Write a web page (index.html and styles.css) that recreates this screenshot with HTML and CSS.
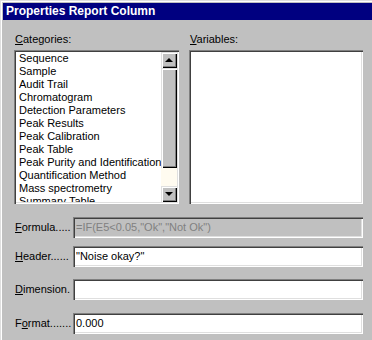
FILE: index.html
```html
<!DOCTYPE html>
<html lang="en">
<head>
    <meta charset="UTF-8">
    <title>Properties Report Column</title>
    <link rel="stylesheet" href="styles.css">
</head>
<body>
    <div class="window">
        <div class="titlebar">Properties Report Column</div>

        <div class="dialog">
            <div class="columns">
                <div class="col col-left">
                    <label class="caption"><u>C</u>ategories:</label>
                    <div class="listbox">
                        <ul class="items">
                            <li>Sequence</li>
                            <li>Sample</li>
                            <li>Audit Trail</li>
                            <li>Chromatogram</li>
                            <li>Detection Parameters</li>
                            <li>Peak Results</li>
                            <li>Peak Calibration</li>
                            <li>Peak Table</li>
                            <li>Peak Purity and Identification</li>
                            <li>Quantification Method</li>
                            <li>Mass spectrometry</li>
                            <li>Summary Table</li>
                        </ul>
                        <div class="scrollbar">
                            <div class="sb-btn"><span class="arrow up"></span></div>
                            <div class="sb-thumb"></div>
                            <div class="sb-track"></div>
                            <div class="sb-btn"><span class="arrow down"></span></div>
                        </div>
                    </div>
                </div>
                <div class="col col-right">
                    <label class="caption"><u>V</u>ariables:</label>
                    <div class="listbox"></div>
                </div>
            </div>

            <div class="field row-formula">
                <label><u>F</u>ormula.....</label>
                <div class="edit disabled">=IF(E5&lt;0.05,"Ok","Not Ok")</div>
            </div>
            <div class="field row-header">
                <label><u>H</u>eader......</label>
                <div class="edit">"Noise okay?"</div>
            </div>
            <div class="field row-dimension">
                <label><u>D</u>imension.</label>
                <div class="edit"></div>
            </div>
            <div class="field row-format">
                <label>F<u>o</u>rmat.......</label>
                <div class="edit">0.000</div>
            </div>
        </div>
    </div>
</body>
</html>
```

FILE: styles.css
```css
:root {
    --face: #c0c0c0;
    --light: #dfdfdf;
    --shadow: #808080;
    --dark: #404040;
    --title: #000080;
}

* {
    box-sizing: border-box;
}

body {
    margin: 0;
    background: var(--face);
    font-family: "Liberation Sans", Arial, sans-serif;
    font-size: 11px;
    line-height: 13px;
    color: #000;
}

.window {
    width: 372px;
    height: 340px;
    overflow: hidden;
    padding: 3px 0 0 3px;
    background: var(--face);
    box-shadow: inset 1px 1px var(--light), inset 2px 2px #fff;
}

.titlebar {
    height: 17px;
    padding: 2px 0 0 3px;
    background: var(--title);
    color: #fff;
    font-weight: bold;
    font-size: 12px;
}

.dialog {
    padding: 13px 0 0 11px;
}

.columns {
    display: flex;
    gap: 10px;
}

.col {
    display: flex;
    flex-direction: column;
}

.col-left {
    width: 165px;
}

.col-right {
    width: 174px;
}

.caption {
    padding-left: 1px;
    margin-bottom: 4px;
}

.listbox {
    display: flex;
    height: 154px;
    padding: 2px;
    background: #fff;
    box-shadow: inset 1px 1px var(--shadow), inset 2px 2px var(--dark),
                inset -1px -1px #fff, inset -2px -2px var(--light);
}

.items {
    flex: 1;
    margin: 0;
    padding: 0 0 0 3px;
    list-style: none;
    overflow: hidden;
    white-space: nowrap;
}

.scrollbar {
    width: 16px;
    display: flex;
    flex-direction: column;
}

.sb-btn,
.sb-thumb {
    background: var(--face);
    box-shadow: inset 1px 1px var(--light), inset 2px 2px #fff,
                inset -1px -1px #000, inset -2px -2px var(--shadow);
}

.sb-btn {
    height: 16px;
    display: flex;
    align-items: center;
    justify-content: center;
}

.sb-thumb {
    height: 100px;
}

.sb-track {
    flex: 1;
    background: #fffbf0;
}

.arrow {
    width: 0;
    height: 0;
    border-left: 4px solid transparent;
    border-right: 4px solid transparent;
}

.arrow.up {
    border-bottom: 4px solid #000;
}

.arrow.down {
    border-top: 4px solid #000;
}

.field {
    display: flex;
    align-items: center;
}

.field label {
    width: 59px;
    padding-left: 1px;
}

.edit {
    width: 290px;
    height: 21px;
    padding: 4px 3px 0;
    background: #fff;
    white-space: nowrap;
    overflow: hidden;
    box-shadow: inset 1px 1px var(--shadow), inset 2px 2px var(--dark),
                inset -1px -1px #fff, inset -2px -2px var(--light);
}

.edit.disabled {
    background: var(--face);
    color: var(--shadow);
}

.row-formula {
    margin-top: 13px;
}

.row-header {
    margin-top: 8px;
}

.row-dimension {
    margin-top: 12px;
}

.row-format {
    margin-top: 13px;
}
```
